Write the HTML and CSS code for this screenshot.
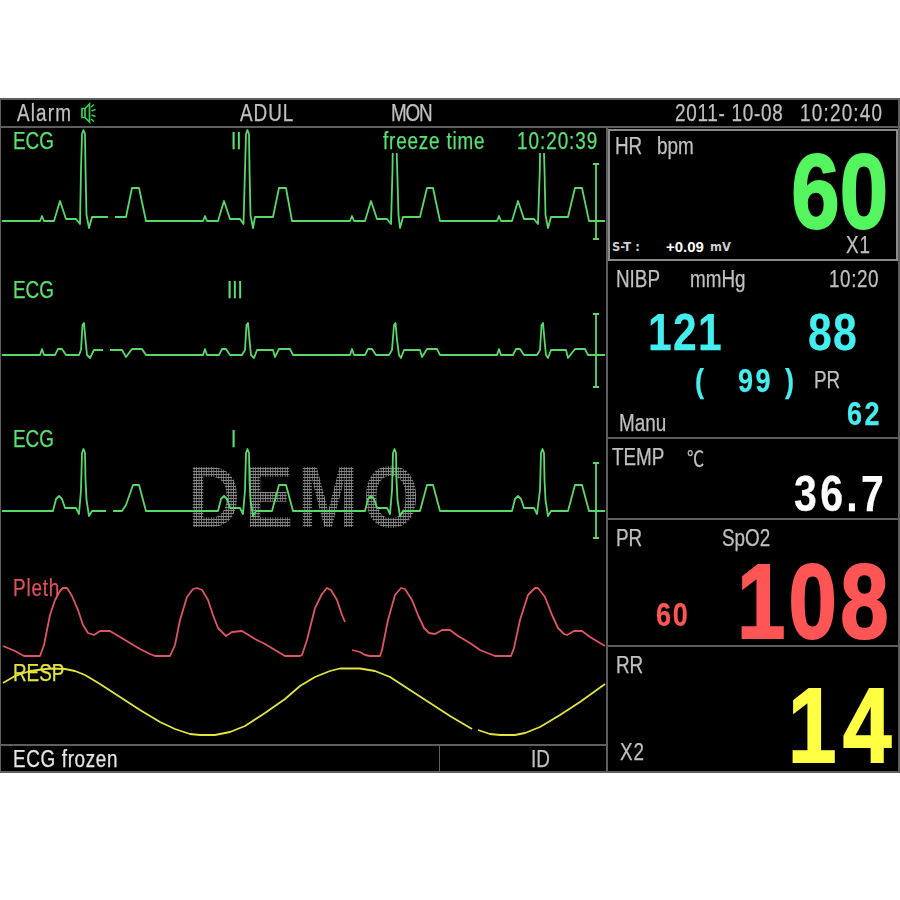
FILE: index.html
```html
<!DOCTYPE html>
<html lang="en">
<head>
<meta charset="utf-8">
<title>Patient Monitor</title>
<link rel="stylesheet" href="styles.css">
</head>
<body>
<main class="monitor">
  <header class="topbar">
    <div class="alarm"><span class="alarm-text">Alarm</span>
      <svg class="speaker" width="16" height="22" viewBox="0 0 16 22" aria-hidden="true">
        <path d="M1 6.5H4V15.5H1ZM4 6.5L8.5 2V20L4 15.5" fill="none" stroke="#35d04f" stroke-width="1.7"/>
        <path d="M10 5L13 2.5M10.5 9L14.5 7.5M10.5 13L14.5 14.5M10 17L13 19.5" fill="none" stroke="#35d04f" stroke-width="1.5"/>
      </svg>
    </div>
    <div class="adul">ADUL</div>
    <div class="mon">MON</div>
    <div class="date">2011- 10-08</div>
    <div class="clock">10:20:40</div>
  </header>
  <div class="body">
    <section class="left">
      <div class="waves">
        <div class="demo">DEMO</div>
        <div class="lead green first"><span>ECG</span><span>II</span><span class="freeze">freeze time</span><span class="freeze-clock">10:20:39</span></div>
        <div class="lead green lead-iii"><span>ECG</span><span>III</span></div>
        <div class="lead green"><span>ECG</span><span>I</span></div>
        <div class="lead pleth"><span class="pleth-text">Pleth</span></div>
        <div class="lead resp"><span>RESP</span></div>
        <svg class="traces" width="606" height="616" viewBox="1 128 606 616" aria-hidden="true">
          <g class="ecg">
            <path d="M2 221H40L42 216L44 221H54L60 201L66 219H76L80 224L81 170L82 134L83.5 130L85 134L85.5 170L86.5 215L89 228L92 217H108"/>
            <path d="M115 217H126L132 188H139L146 221H203L205 216L207 221H218L224 201L230 219H240L243.5 224L245 170L246 134L247.5 130L249 134L249.5 170L250.5 215L253 228L255 217H273L279 188H286L292 221H350L352 216L354 221H365L371 201L377 219H387L391 224L392.5 170L392.7 153M396.7 153L397.2 170L398.5 215L400 228L403 217H420L427 188H433L440 221H497L499 216L501 221H512L518 201L524 219H534L538 224L539.8 170L540 153M544 153L544.5 170L545.5 215L548 228L551 217H568L575 188H582L589 221H605"/>
            <path d="M593 164H599M596 164V239M593 239H599"/>
            <path d="M2 355H40L42 349L44 355H55L58 349H62L66 355H79L81 350L82.5 325L84 323L85.5 340L87 355L90 358L94 350H103"/>
            <path d="M110 350H122L126 357L132 349H142L146 355H203L205 349L207 355H219L222 349H226L230 355H242L245 350L246.5 325L248 323L249.5 340L251 355L254 358L257 350H273L275 357L279 349H290L293 355H350L352 349L354 355H365L368 349H372L376 355H389L392 350L394 325L395.5 323L397 340L399 355L401 358L404 350H420L422 357L427 349H437L440 355H497L499 349L501 355H513L516 349H520L524 355H537L540 350L541.5 325L543 323L544.5 340L546 355L548 358L551 350H566L568 358L575 349H585L588 355H605"/>
            <path d="M593 314H599M596 314V387M593 387H599"/>
            <path d="M2 511H53L56 499L59 496L62 499L65 508H76L79 514L81 490L82 453L83.5 449L85 453L85.5 480L86.5 500L89 516L92 511H106"/>
            <path d="M113 511H122L126 505L133 485H139L146 511H218L221 499L224 496L227 499L230 508H240L243 514L245 490L246 453L247.5 449L249 453L249.5 480L250.5 500L253 516L256 511H272L279 485H286L293 511H365L368 499L371 496L374 499L377 508H387L390 514L392 490L393 453L394.5 449L396 453L396.5 480L397.5 500L400 516L403 511H420L427 485H433L440 511H512L515 499L518 496L521 499L524 508H534L537 514L540 490L541 453L542.5 449L544 453L544.5 480L545.5 500L548 516L551 511H568L575 485H582L589 511H605"/>
            <path d="M593 463H599M596 463V538M593 538H599"/>
          </g>
          <g class="pleth-line">
            <path d="M3 646L15 651L24 656H40L44 645L50 615L55 600L60 591L63 588H67L72 596L78 610L83 625L88 633L94 635L100 631H110L120 637L130 643L140 649L150 654L155 656H170L175 645L180 620L187 597L193 589L197 588L202 590L208 600L213 615L218 628L224 634L226 636L232 632L242 631L255 639L265 644L275 650L285 656H300L302 655L307 640L315 608L322 594L327 588L331 590L337 600L342 615L345 622"/>
            <path d="M352 650L360 652L365 655L370 656H380L382 650L388 620L395 595L401 588L405 589L412 600L418 615L424 628L429 633L435 634L442 630H450L458 636L470 643L480 650L495 656H511L514 648L520 620L528 595L535 588H538L545 597L552 615L558 628L564 634L567 635L574 631H582L590 637L600 643L605 646"/>
          </g>
          <g class="resp-line">
            <path d="M3 683L15 676L30 671L50 668.5L65 669L75 671L85 675L100 684L120 697L140 710L160 722L175 729L190 734L200 735H215L230 732L245 726L265 713L285 699L300 686L315 677L330 671L340 668.5H360L375 671L390 677L410 690L430 703L450 716L472 729"/>
            <path d="M478 730L490 734L500 735H515L525 733L540 727L560 715L580 702L605 684"/>
          </g>
        </svg>
      </div>
      <footer class="status">
        <div class="status-main"><span>ECG frozen</span></div>
        <div class="status-id"><span>ID</span></div>
      </footer>
    </section>
    <aside class="right">
      <section class="panel hr">
        <div class="head hr-head"><span>HR</span><span>bpm</span></div>
        <div class="big hr-value">60</div>
        <div class="hr-foot">
          <span class="st-label">S-T :</span>
          <span class="st-value">+0.09</span>
          <span class="st-unit">mV</span>
          <span class="gain">X1</span>
        </div>
      </section>
      <section class="panel nibp">
        <div class="head nibp-head"><span>NIBP</span><span>mmHg</span><span class="nibp-time">10:20</span></div>
        <div class="nibp-values"><span>121</span><span>88</span></div>
        <div class="nibp-mean"><span class="cyan">(</span><span class="cyan">99</span><span class="cyan">)</span><span class="pr-label">PR</span></div>
        <div class="nibp-foot"><span class="manu">Manu</span><span class="cyan">62</span></div>
      </section>
      <section class="panel temp">
        <div class="head temp-head"><span>TEMP</span><span class="celsius">℃</span></div>
        <div class="temp-value">36.7</div>
      </section>
      <section class="panel spo2">
        <div class="head spo2-head"><span>PR</span><span>SpO2</span></div>
        <div class="spo2-body"><span class="pr-small">60</span><span class="big red">108</span></div>
      </section>
      <section class="panel rr">
        <div class="head rr-head"><span>RR</span></div>
        <div class="rr-body"><span class="gain-rr">X2</span><span class="big yellow">14</span></div>
      </section>
    </aside>
  </div>
</main>
</body>
</html>
```
FILE: styles.css
```css
* { box-sizing: border-box; }
html, body { margin: 0; background: #fff; }
body {
  width: 900px;
  height: 900px;
  padding-top: 98px;
  font-family: "Liberation Sans", Arial, sans-serif;
  font-size: 23px;
  color: #c0c0c0;
}

/* The monitor's font is a condensed face: every label is narrowed from its left edge. */
.topbar > div:not(.alarm), .alarm-text, .lead span, .status span, .head span,
.gain, .gain-rr, .nibp-values span, .cyan, .pr-label, .manu, .pr-small {
  display: inline-block;
  transform: scaleX(0.82);
  transform-origin: 0 50%;
}
/* Large readings are narrowed from their right edge, since they sit flush right. */
.big, .temp-value {
  transform: scaleX(0.82);
  transform-origin: 100% 50%;
}

.monitor {
  width: 900px;
  height: 675px;
  background: #000;
  border: solid #5e5e5e;
  border-width: 2px 2px 2px 1px;
  display: flex;
  flex-direction: column;
  filter: blur(0.35px);
  -webkit-text-stroke: 0.25px;
}
.topbar {
  height: 28px;
  border-bottom: 2px solid #5e5e5e;
  padding-left: 16px;
  display: grid;
  grid-template-columns: 223px 151px 284px 125px 1fr;
  align-items: center;
  line-height: 24px;
  white-space: nowrap;
}
.alarm { display: grid; grid-template-columns: 64px auto; justify-content: start; align-items: center; }
.alarm-text { letter-spacing: 1.4px; }
.adul { letter-spacing: 1.2px; }
.mon { letter-spacing: -1.5px; }
.date { letter-spacing: 0.9px; }
.clock { letter-spacing: 1.5px; }
.speaker { display: block; }
.body { flex: 1; display: grid; grid-template-columns: 606px 1fr; min-height: 0; }
.left { display: flex; flex-direction: column; border-right: 2px solid #5e5e5e; width: 607px; }
.waves {
  position: relative;
  height: 616px;
  padding-top: 1px;
  display: grid;
  grid-template-rows: 149px 149px 149px 85px 1fr;
}
.traces { position: absolute; left: 0; top: 0; }
.traces path { fill: none; stroke-width: 1.8; stroke-linejoin: round; }
.ecg path { stroke: #58d868; }
.pleth-line path { stroke: #e05562; }
.resp-line path { stroke: #e4e43c; }
.lead {
  padding-left: 12px;
  line-height: 24px;
  display: grid;
  grid-template-columns: 218px 152px 134px 1fr;
  align-content: start;
  white-space: nowrap;
}
.lead-iii { grid-template-columns: 214px 1fr; }
.freeze { letter-spacing: 1px; }
.freeze-clock { letter-spacing: 1.2px; }
.pleth-text { letter-spacing: 1px; }
.green { color: #58e070; }
.pleth { color: #e0505c; }
.resp { color: #e4e43c; }
.demo {
  position: absolute;
  left: 187px;
  top: 324px;
  font-weight: 700;
  font-size: 88px;
  line-height: 90px;
  letter-spacing: 6px;
  color: transparent;
  -webkit-text-stroke: 0;
  background: radial-gradient(circle, #868686 0 1.1px, transparent 1.1px) 0 0 / 3px 3px;
  -webkit-background-clip: text;
  background-clip: text;
  transform: scaleX(0.82);
  transform-origin: 0 50%;
}
.status {
  flex: 1;
  border-top: 2px solid #5e5e5e;
  display: grid;
  grid-template-columns: 438px 1fr;
  line-height: 26px;
}
.status-main { padding-left: 12px; color: #e6e6e6; }
.status-main span { letter-spacing: 0.8px; }
.status-id { border-left: 1px solid #5e5e5e; padding-left: 91px; }
.right { display: flex; flex-direction: column; min-width: 0; }
.panel { border-bottom: 2px solid #5e5e5e; }
.panel:last-child { border-bottom: 0; }
.head { line-height: 22px; white-space: nowrap; }
.big { font-weight: 700; font-size: 106px; line-height: 79px; -webkit-text-stroke: 2px; }
.hr {
  height: 132px;
  margin: 1px 0 2px 1px;
  border: 2px solid #8a8a8a;
  width: 290px;
}
.hr-head { padding: 4px 0 0 5px; display: grid; grid-template-columns: 42px 1fr; }
.hr-value { color: #55f55f; text-align: right; margin-right: 8px; margin-top: -5px; }
.hr-foot {
  margin-top: 2px;
  padding-left: 2px;
  display: grid;
  grid-template-columns: 54px 44px 136px auto;
  align-items: center;
  line-height: 20px;
}
.st-label, .st-unit { font-family: "DejaVu Sans", sans-serif; font-size: 11.5px; font-weight: 700; color: #cfcfcf; margin-top: 4px; -webkit-text-stroke: 0; }
.st-value { font-size: 15px; font-weight: 700; color: #fff; margin-top: 4px; -webkit-text-stroke: 0; }
.gain { letter-spacing: 1px; }
.nibp { height: 176px; padding-top: 5px; }
.nibp-head { padding-left: 9px; display: grid; grid-template-columns: 74px 139px auto; }
.nibp-time { letter-spacing: 0.7px; }
.nibp-values {
  margin-top: 22px;
  padding-left: 41px;
  display: grid;
  grid-template-columns: 160px auto;
  font-weight: 700;
  font-size: 52px;
  letter-spacing: 1.5px;
  line-height: 40px;
  color: #44eeee;
}
.nibp-mean {
  margin-top: 12px;
  padding-left: 88px;
  display: grid;
  grid-template-columns: 43px 47px 29px auto;
  align-items: center;
  line-height: 32px;
}
.cyan { color: #44eeee; font-weight: 700; font-size: 33px; letter-spacing: 3px; }
.pr-label { padding-bottom: 2px; }
.nibp-foot {
  padding-left: 12px;
  display: grid;
  grid-template-columns: 228px auto;
  line-height: 32px;
}
.manu { line-height: 22px; margin-top: 14px; }
.temp { height: 81px; padding-top: 7px; }
.temp-head { padding-left: 5px; display: grid; grid-template-columns: 75px 1fr; }
.celsius { font-family: "Noto Sans CJK SC", "DejaVu Sans", sans-serif; font-size: 21px; }
.temp-value {
  margin-top: 6px;
  margin-right: 11px;
  text-align: right;
  font-weight: 700;
  font-size: 50px;
  letter-spacing: 4px;
  line-height: 40px;
  color: #fff;
}
.spo2 { height: 127px; padding-top: 7px; }
.spo2-head { padding-left: 9px; display: grid; grid-template-columns: 106px 1fr; }
.spo2-body {
  margin-top: 13px;
  padding: 0 6px 0 49px;
  display: flex;
  justify-content: space-between;
}
.pr-small { color: #ff5555; font-weight: 700; font-size: 33px; letter-spacing: 2px; line-height: 32px; margin-top: 37px; }
.red { color: #ff5555; letter-spacing: 4px; }
.rr { flex: 1; padding-top: 7px; }
.rr-head { padding-left: 9px; }
.rr-body {
  margin-top: 10px;
  padding: 0 0 0 13px;
  display: flex;
  justify-content: space-between;
}
.gain-rr { align-self: flex-end; line-height: 22px; margin-bottom: 2px; letter-spacing: 1px; }
.yellow { color: #ffff44; letter-spacing: 8px; }
```
